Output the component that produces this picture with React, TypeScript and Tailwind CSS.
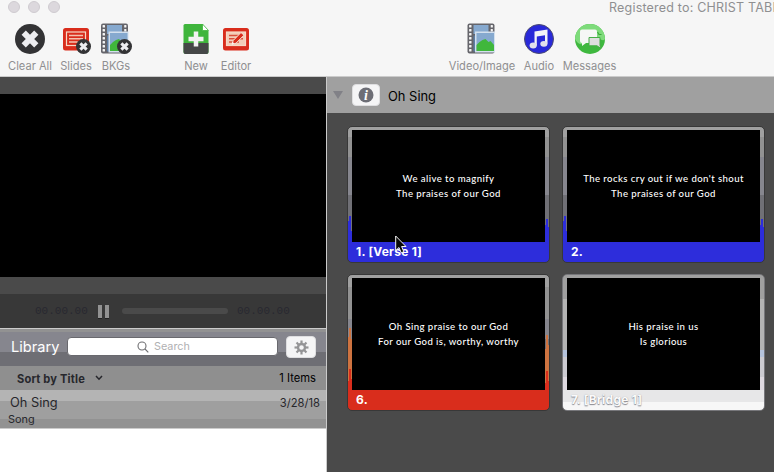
import type { ReactNode } from "react";

const UI = "font-['Inter','Liberation_Sans',sans-serif]";

function Cross({ x, y, s }: { x: number; y: number; s: number }) {
  return (
    <g transform={`translate(${x} ${y}) scale(${s})`}>
      <circle r="15" fill="#333335" />
      <path d="M-6.3 -6.3 L6.3 6.3 M6.3 -6.3 L-6.3 6.3" stroke="#ededf0" strokeWidth="6" fill="none" />
    </g>
  );
}

function Film() {
  return (
    <g>
      <rect x="2" y="0.5" width="27" height="30" rx="2" fill="#65656b" />
      <rect x="8" y="2" width="15" height="9" fill="#86a9cf" />
      <rect x="8" y="12.5" width="15" height="16" fill="#5d7fa5" />
      {[2, 6, 10, 14, 18, 22, 26].map((y) => (
        <rect key={y} x="3.6" y={y} width="2.4" height="2.4" rx=".5" fill="#f4f4f4" />
      ))}
      {[2, 6].map((y) => (
        <rect key={y} x="25.2" y={y} width="2.2" height="2.4" rx=".5" fill="#f4f4f4" />
      ))}
      <rect x="9.5" y="8.5" width="20" height="21" fill="#d3e0ee" />
      <rect x="11" y="10" width="17.5" height="18" fill="#86a9cf" />
      <path d="M11 28 V22 L14 19 L17 17 L20 16 L23 19 L25 18 L28.5 22 V28Z" fill="#40b73c" />
    </g>
  );
}

function SlideBox({ pencil = false }: { pencil?: boolean }) {
  return (
    <g>
      <rect x="3" y="5" width="26" height="22.5" rx="2.5" fill="#d92d1c" />
      <rect x="6.500" y="9" width="19" height="13.500" fill={pencil ? "#f3cdb8" : "#d92d1c"} stroke="#f6d9c6" strokeWidth="1.2" />
      <path d="M9 12.5H23 M9 15.8H23 M9 19.1H19" stroke={pencil ? "#d9503c" : "#f3c3b0"} strokeWidth="1.5" />
      {pencil && (
        <g>
          <path d="M12 21.5 L13.2 17.5 L21 9.5 L24 12.2 L16 20.2Z" fill="#d92d1c" stroke="#f9e6d9" strokeWidth="1" />
          <path d="M12 21.5 L12.7 19 L14.3 20.6Z" fill="#fff" />
        </g>
      )}
    </g>
  );
}

function Tool({ label, className, children }: { label: string; className: string; children: ReactNode }) {
  return (
    <div className={`flex shrink-0 flex-col items-center ${className}`}>
      <svg width="32" height="32" viewBox="0 0 32 32" className="block shrink-0">
        {children}
      </svg>
      <span className="mt-1 text-[11.1px] leading-[14px] whitespace-nowrap text-[#8f8f91]">{label}</span>
    </div>
  );
}

function Header() {
  return (
    <header className="h-[77px] overflow-hidden border-b border-[#cbcbcb] bg-[#f6f6f6]">
      <div className="flex h-[23px] items-start gap-2 pl-2">
        {[0, 1, 2].map((i) => (
          <span key={i} className="mt-[1px] size-3 shrink-0 rounded-full border border-[#cfcbd0] bg-[#dcd8dd]" />
        ))}
        <span className="ml-[541px] w-[165px] shrink-0 overflow-hidden text-[12.5px] leading-[15px] tracking-[0.2px] whitespace-nowrap text-[#8f8f91]">
          Registered to: CHRIST TABE
        </span>
      </div>
      <div className="flex pl-2">
        <Tool label="Clear All" className="w-11">
          <Cross x={16} y={16} s={1} />
        </Tool>
        <Tool label="Slides" className="ml-2 w-8">
          <SlideBox />
          <Cross x={23.5} y={23.5} s={0.5} />
        </Tool>
        <Tool label="BKGs" className="ml-2 w-8">
          <g transform="translate(-1 0)">
            <Film />
          </g>
          <Cross x={24.5} y={23.5} s={0.5} />
        </Tool>
        <Tool label="New" className="ml-12 w-8">
          <path d="M5 1H22.500L28.500 8V29q0 2-2 2H5.500q-2 0-2-2V2.500Q3.500 1 5 1Z" fill="#3fb53c" />
          <path d="M3.500 20H28.500V29q0 2-2 2H5.500q-2 0-2-2Z" fill="#454747" />
          <path d="M22.500 1V7.500H28.500Z" fill="#fff" stroke="#3fb53c" strokeWidth=".8" />
          <path d="M16 8.500V23.500M8.500 16H23.500" stroke="#f2f2f2" strokeWidth="4.500" />
        </Tool>
        <Tool label="Editor" className="ml-2 w-8">
          <SlideBox pencil />
        </Tool>
        <Tool label="Video/Image" className="ml-[197px] w-[66px]">
          <g transform="translate(-.5 0)">
            <Film />
          </g>
        </Tool>
        <Tool label="Audio" className="ml-2 w-8">
          <circle cx="16" cy="16" r="14.500" fill="#2929d9" stroke="#4b4b70" strokeWidth="1" />
          <path d="M11.500 8.500L24.500 6.500V20.500H22V12.200L13.800 13.500V22.500H11.500Z" fill="#f4f4f8" />
          <ellipse cx="10.200" cy="22.500" rx="3.600" ry="2.900" fill="#e2e0ec" />
          <ellipse cx="20.900" cy="20.800" rx="3.600" ry="2.900" fill="#e2e0ec" />
        </Tool>
        <Tool label="Messages" className="ml-2 w-[53px]">
          <circle cx="16" cy="16" r="15" fill="#3fb83f" />
          <path d="M1 16A15 15 0 0 1 31 16Q29 19 25 15Q16 12 8 21Q4 22 1 16Z" fill="#7edb7b" />
          <path d="M8 6.500H21q2 0 2 2V18q0 2-2 2H12L8 23V20q-2 0-2-2V8.500q0-2 2-2Z" fill="#f5f7f5" />
          <path d="M15 14.500H26V22.500L27 25.500L23 22.800H15Z" fill="#dedede" stroke="#45ad45" strokeWidth="1" />
          <path d="M23.500 9L25 11.500H27.500" stroke="#3ba83b" strokeWidth="1.200" fill="none" />
        </Tool>
      </div>
    </header>
  );
}

function Clock() {
  return (
    <span className="w-[54px] font-['Liberation_Mono',monospace] text-[11px] leading-none whitespace-nowrap text-[#282830]">
      00.00.00
    </span>
  );
}

function LeftPanel() {
  return (
    <aside className="flex w-[327px] shrink-0 flex-col border-r border-[#cbcbcb] bg-white">
      <div className="h-[217px] shrink-0 border-y-[17px] border-[#4a4a4a] bg-black" />
      <div className="flex h-[34px] shrink-0 items-center bg-[#383838] pl-[35px]">
        <Clock />
        <span className="ml-[9px] flex gap-[3px]">
          <i className="h-[13px] w-1 bg-[#929292] shadow-[0_1px_0_#222]" />
          <i className="h-[13px] w-1 bg-[#929292] shadow-[0_1px_0_#222]" />
        </span>
        <span className="mr-[9px] ml-[13px] h-1.5 w-[106px] rounded-full bg-[#4a4a4a]" />
        <Clock />
      </div>
      <div className="flex h-[38px] shrink-0 border-t border-[#cbcbcb] bg-[linear-gradient(#929292_0_3px,#86868e_3px_23px,#6e6e74_23px)] pl-[11px]">
        <h2 className="w-14 pt-[8px] text-[14.6px] leading-5 whitespace-nowrap text-white">Library</h2>
        <div className="mt-2 flex h-[19px] w-[211px] items-center rounded-[4px] border border-[#69696e] bg-white pl-[69px]">
          <svg width="12" height="12" viewBox="0 0 12 12" fill="none" stroke="#6f6f72" strokeWidth="1.1">
            <circle cx="5" cy="5" r="4" />
            <path d="M8 8L11.300 11.300" />
          </svg>
          <span className="ml-[5px] pt-px text-[10.800px] leading-4 text-[#b0b0b2]">Search</span>
        </div>
        <button className="mt-[7px] ml-2 flex h-[22px] w-[30px] items-center justify-center rounded-[4px] border border-[#dedee0] bg-[#f5f5f6]">
          <svg width="15" height="15" viewBox="-7.500 -7.500 15 15" fill="none" stroke="#949496">
            <circle r="3.500" strokeWidth="2.400" />
            {[0, 45, 90, 135, 180, 225, 270, 315].map((a) => (
              <path key={a} d="M0 -4V-7" strokeWidth="2.200" transform={`rotate(${a})`} />
            ))}
          </svg>
        </button>
      </div>
      <div className="flex h-[24px] shrink-0 items-center bg-[#8f8f8f] pr-2.5 pl-[17px]">
        <b className="pt-px text-[11.1px] leading-4 font-bold tracking-[0.17px] text-[#27272c]">Sort by Title</b>
        <svg width="8" height="6" viewBox="0 0 8 6" className="ml-[10px]" fill="none" stroke="#27272c" strokeWidth="1.500">
          <path d="M1 1L4 4.200L7 1" />
        </svg>
        <span className="ml-auto text-[11.2px] leading-4 text-black">1 Items</span>
      </div>
      <div className="h-[39px] shrink-0 border-b border-[#cbcbcb] bg-[linear-gradient(#b4b4b4_0_11px,#9f9f9f_11px_29px,#929292_29px)] pr-[6px] pl-2 text-[#27272c]">
        <div className="flex items-center justify-between pt-[4px] pl-[2px] leading-4">
          <span className="pt-px text-[12.800px]">Oh Sing</span>
          <span className="text-[11.2px]">3/28/18</span>
        </div>
        <div className="text-[10.900px] leading-4">Song</div>
      </div>
    </aside>
  );
}

type Slide = { label: string; lines: [string, string]; frame: string; text: string; flames?: ReactNode };

const blueFlames = (
  <g fill="#2d2ddb">
    <path d="M0 112V94H1V89H3V104H4V116H0Z" />
    <path d="M201 112V100H200V92H198V98H197V116H201Z" />
  </g>
);

const redFlames = (
  <g>
    <path d="M0 116V62H1V53H3V64H4V116Z M201 116V70H200V60H198V74H197V116Z" fill="#ce7340" />
    <path d="M0 116V106H1V94H3V104H4V116Z M201 116V106H200V96H198V108H197V116Z" fill="#d92d1c" />
  </g>
);

const blueFrame =
  "border-[#383838] bg-[linear-gradient(#a0a0a0_0_10px,#929292_10px_30px,#86868e_30px_68px,#707076_68px_112px,#2d2ddb_112px)]";

const slides: Slide[] = [
  { label: "1. [Verse 1]", lines: ["We alive to magnify", "The praises of our God"], frame: blueFrame, text: "text-white", flames: blueFlames },
  { label: "2.", lines: ["The rocks cry out if we don't shout", "The praises of our God"], frame: blueFrame, text: "text-white", flames: blueFlames },
  {
    label: "6.",
    lines: ["Oh Sing praise to our God", "For our God is, worthy, worthy"],
    frame:
      "border-[#383838] bg-[linear-gradient(#a0a0a0_0_12px,#929292_12px_44px,#86868e_44px_64px,#707076_64px_106px,#d92d1c_106px)]",
    text: "text-white",
    flames: redFlames,
  },
  {
    label: "7. [Bridge 1]",
    lines: ["His praise in us", "Is glorious"],
    frame:
      "border-[#77777b] bg-[linear-gradient(#a0a0a0_0_24px,#b4b4b4_24px_75px,#b5c3dc_75px_82px,#cccbd1_82px_102px,#ded9e0_102px_115px,#e7e7e8_115px_127px,#f7f7f7_127px)]",
    text: "text-[#fafafa] [text-shadow:0_1px_1px_#888890,0_0_1px_#aaaab0]",
  },
];

function SlideCard({ slide }: { slide: Slide }) {
  return (
    <article className={`relative h-[137px] w-[203px] overflow-hidden rounded-[5px] border ${slide.frame} px-1 pt-[3px]`}>
      <svg className="absolute top-0 left-0" width="201" height="135" viewBox="0 0 201 135">
        {slide.flames}
      </svg>
      <div className="relative flex h-[112px] w-[193px] flex-col items-center bg-black pt-[41px] font-['Lato',sans-serif] text-[9.600px] leading-[15px] font-medium tracking-[0.42px] whitespace-nowrap text-white">
        {slide.lines.map((line) => (
          <p key={line}>{line}</p>
        ))}
      </div>
      <div className={`relative pl-1 text-[12px] leading-[20px] font-bold tracking-[0.25px] ${slide.text}`}>{slide.label}</div>
    </article>
  );
}

export default function App() {
  return (
    <div className={`relative h-[472px] w-[774px] overflow-hidden bg-[#4a4a4a] ${UI}`}>
      <Header />
      <div className="flex h-[395px]">
        <LeftPanel />
        <main className="min-w-0 flex-1">
          <div className="flex h-9 items-center bg-[#a0a0a0] pl-1.5">
            <svg width="10" height="8" viewBox="0 0 10 8">
              <path d="M0 0H10L5 8Z" fill="#818187" />
            </svg>
            <span className="ml-[9px] flex h-[22px] w-7 items-center justify-center rounded-[4px] border border-[#dedee0] bg-[#f5f5f6]">
              <svg width="16" height="16" viewBox="0 0 16 16">
                <circle cx="8" cy="8" r="7.500" fill="#6d6e76" />
                <text x="8" y="12.700" textAnchor="middle" className="font-['Liberation_Serif',serif] text-[14px] font-bold italic" fill="#fff">
                  i
                </text>
              </svg>
            </span>
            <h1 className="ml-2 pt-[3px] text-[12.900px] leading-4 text-black">Oh Sing</h1>
          </div>
          <div className="grid grid-cols-[203px_203px] gap-x-[12px] gap-y-[11px] pt-[13px] pl-5">
            {slides.map((slide) => (
              <SlideCard key={slide.label} slide={slide} />
            ))}
          </div>
        </main>
      </div>
      <svg className="absolute top-[235px] left-[395px]" width="12" height="19" viewBox="0 0 12 19">
        <path d="M.7 1V15.500L4 12.500L6.200 17.800L8.800 16.700L6.600 11.500H11Z" fill="#080808" stroke="#f4f4f4" strokeWidth="1" />
      </svg>
    </div>
  );
}
